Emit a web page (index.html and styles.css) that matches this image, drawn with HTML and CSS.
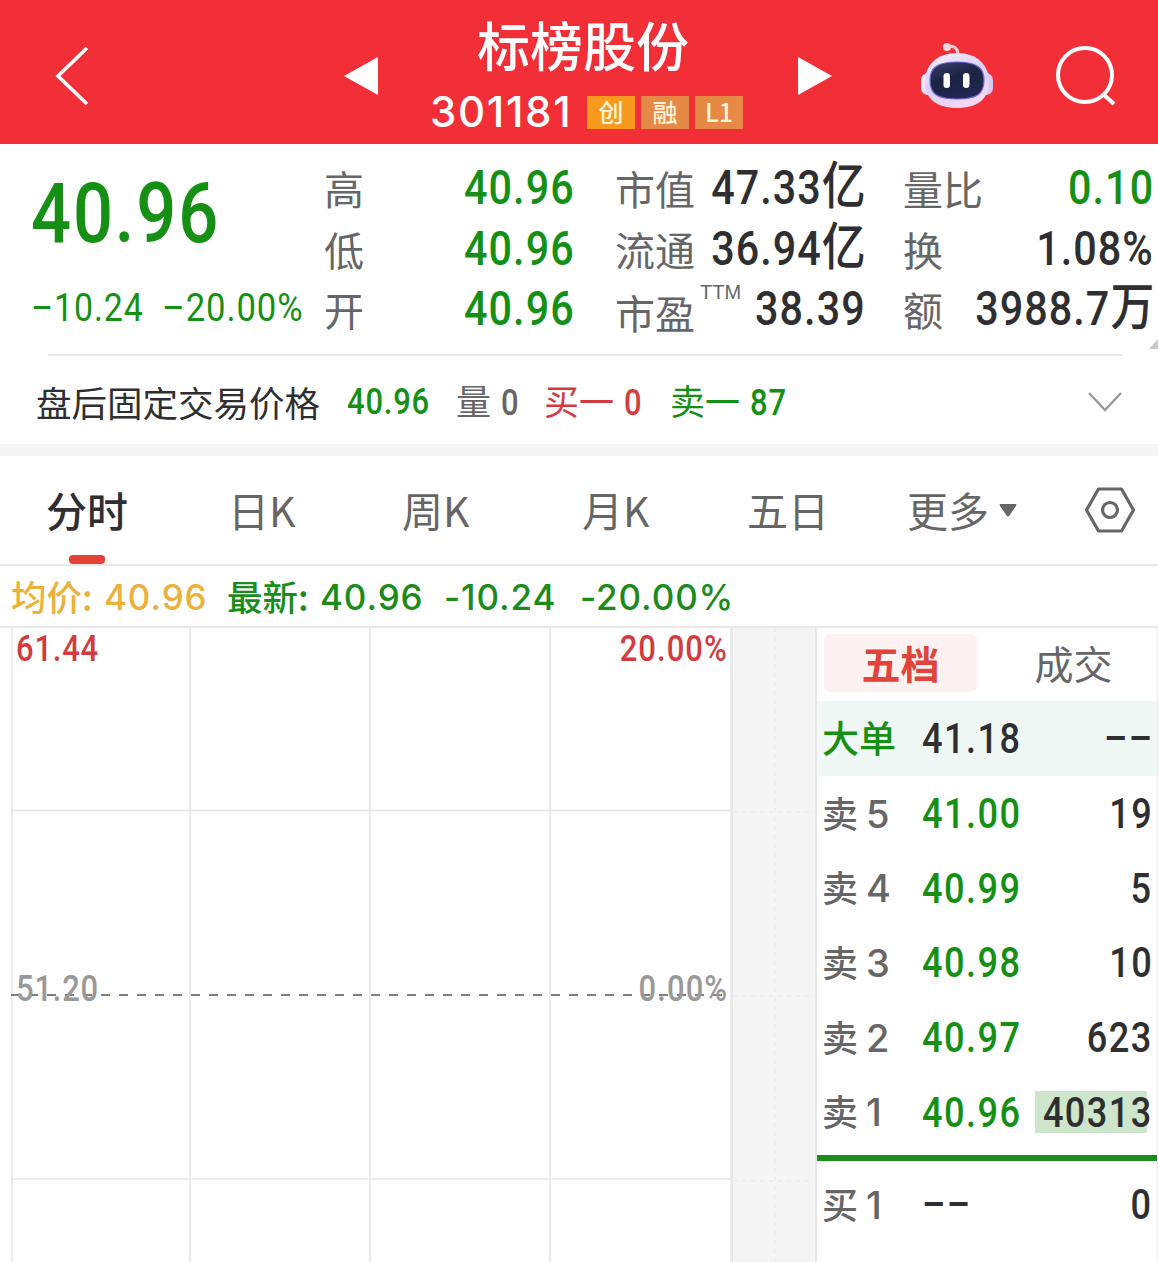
FILE: index.html
```html
<!DOCTYPE html>
<html lang="zh-CN">

<head>
    <meta charset="UTF-8">
    <meta name="viewport" content="width=device-width, initial-scale=1.0">
    <title>标榜股份 301181</title>
    <link rel="stylesheet" href="styles.css">
</head>

<body>

    <!-- Header -->
    <header class="topbar">
        <svg class="back" viewBox="0 0 36 62" fill="none" stroke="#fff" stroke-width="3.6">
            <path d="M33 3 L4 31 L33 59" />
        </svg>
        <svg class="prev" viewBox="0 0 34 38"><path d="M34 0V38L0 19Z" fill="#fff" /></svg>
        <div class="stock">
            <h1>标榜股份</h1>
            <div class="stock-code">
                <span class="code">301181</span>
                <span class="badge badge-main">创</span>
                <span class="badge">融</span>
                <span class="badge">L1</span>
            </div>
        </div>
        <svg class="next" viewBox="0 0 34 38"><path d="M0 0V38L34 19Z" fill="#fff" /></svg>
        <svg class="robot" viewBox="0 0 74 68">
            <defs>
                <linearGradient id="head" x1="0" y1="0" x2="0.5" y2="1">
                    <stop offset="0" stop-color="#fff3f6" />
                    <stop offset="0.55" stop-color="#d5d0fa" />
                    <stop offset="1" stop-color="#f6d8f3" />
                </linearGradient>
                <linearGradient id="face" x1="0" y1="0" x2="0.4" y2="1">
                    <stop offset="0" stop-color="#3b3f69" />
                    <stop offset="0.5" stop-color="#1b2344" />
                    <stop offset="1" stop-color="#202750" />
                </linearGradient>
            </defs>
            <path d="M27 5C32 3 38 5 38 13" fill="none" stroke="#fbd3da" stroke-width="3" />
            <circle cx="27" cy="5" r="4" fill="#fbd3da" />
            <rect x="1" y="31" width="14" height="22" rx="7" fill="#f3e5fb" />
            <rect x="59" y="31" width="14" height="22" rx="7" fill="#d9c9f5" />
            <path d="M37 11C57 11 69 23 69 40C69 57 57 66 37 66C17 66 5 57 5 40C5 23 17 11 37 11Z" fill="url(#head)" />
            <path d="M37 20C57 20 64 26 64 38C64 52 57 57 37 57C17 57 10 52 10 38C10 26 17 20 37 20Z" fill="url(#face)" stroke="#7468d5" stroke-width="1.2" />
            <rect x="23.500" y="31" width="6.500" height="15" rx="3.200" fill="#fff" />
            <rect x="43" y="31" width="6.500" height="15" rx="3.200" fill="#fff" />
        </svg>
        <svg class="search" viewBox="0 0 62 62" fill="none" stroke="#fff" stroke-width="4">
            <circle cx="30" cy="30" r="27" />
            <path d="M48 49L59 59" />
        </svg>
    </header>

    <!-- Quote -->
    <section class="quote">
        <div class="price-block">
            <div class="price"><span class="num">40.96</span></div>
            <div class="change">
                <span class="num diff">–10.24</span>
                <span class="num">–20.00%</span>
            </div>
        </div>
        <dl class="stats">
            <div><dt>高</dt><dd class="down num">40.96</dd></div>
            <div><dt>低</dt><dd class="down num">40.96</dd></div>
            <div><dt>开</dt><dd class="down num">40.96</dd></div>
        </dl>
        <dl class="stats">
            <div><dt>市值</dt><dd class="num">47.33<i>亿</i></dd></div>
            <div><dt>流通</dt><dd class="num">36.94<i>亿</i></dd></div>
            <div><dt class="low">市盈<sup>TTM</sup></dt><dd class="num">38.39</dd></div>
        </dl>
        <dl class="stats">
            <div><dt>量比</dt><dd class="down num">0.10</dd></div>
            <div><dt>换</dt><dd class="num">1.08%</dd></div>
            <div><dt>额</dt><dd class="num">3988.7<i>万</i></dd></div>
        </dl>
        <svg class="corner" viewBox="0 0 9 10"><path d="M9 0V10H0Z" fill="#c9c9c9" /></svg>
    </section>

    <!-- After-hours trading -->
    <section class="after-hours">
        <span class="ah-title">盘后固定交易价格</span>
        <span class="ah-price down num">40.96</span>
        <span class="ah-item">量<b class="num">0</b></span>
        <span class="ah-item up">买一<b class="num">0</b></span>
        <span class="ah-item down">卖一<b class="num">87</b></span>
        <svg class="expand" viewBox="0 0 34 20" fill="none" stroke="#999" stroke-width="2.4">
            <path d="M1 1L17 18L33 1" />
        </svg>
    </section>

    <!-- Period tabs -->
    <nav class="tabs">
        <a class="tab active">分时</a>
        <a class="tab">日K</a>
        <a class="tab">周K</a>
        <a class="tab">月K</a>
        <a class="tab">五日</a>
        <a class="tab more">更多<svg viewBox="0 0 18 13"><path d="M1 0H17Q18 1 17 2L10 12Q9 13 8 12L1 2Q0 1 1 0Z" fill="#666" /></svg></a>
        <svg class="settings" viewBox="0 0 52 46" fill="none" stroke="#666" stroke-width="3.2">
            <path d="M14.500 2H37.500L49.500 23L37.500 44H14.500L2.500 23Z" stroke-linejoin="round" />
            <circle cx="26" cy="23" r="7.500" />
        </svg>
    </nav>

    <div class="summary">
        <span class="avg">均价:</span><span class="avg value">40.96</span>
        <span class="latest">最新:</span><span class="value">40.96</span>
        <span class="value diff">-10.24</span>
        <span class="value pct">-20.00%</span>
    </div>

    <!-- Chart and order book -->
    <main class="board">
        <div class="chart">
            <svg class="grid" viewBox="0 0 720 635" fill="none" stroke="#e6e6e6" stroke-width="1.6">
                <path d="M1 0V635M179 0V635M359 0V635M539 0V635M720 0V635M0 182.500H720M0 551H720" />
                <path d="M0 367H714" stroke="#555" stroke-width="1.400" stroke-dasharray="9 9" />
            </svg>
            <span class="axis top-left up num">61.44</span>
            <span class="axis top-right up num">20.00%</span>
            <span class="axis mid-left num">51.20</span>
            <span class="axis mid-right num">0.00%</span>
        </div>
        <div class="after-chart">
            <svg viewBox="0 0 82 635" fill="none" stroke="#ebebeb" stroke-width="1.500" stroke-dasharray="4 5">
                <path d="M42 0V635M0 184H82M0 368H82M0 553H82" />
            </svg>
        </div>
        <div class="book">
            <div class="book-tabs">
                <span class="book-tab selected">五档</span>
                <span class="book-tab">成交</span>
            </div>
            <div class="order big"><span class="side down">大单</span><span class="num level">41.18</span><span class="num volume">––</span></div>
            <div class="order"><span class="side">卖<b>5</b></span><span class="num level down">41.00</span><span class="num volume">19</span></div>
            <div class="order"><span class="side">卖<b>4</b></span><span class="num level down">40.99</span><span class="num volume">5</span></div>
            <div class="order"><span class="side">卖<b>3</b></span><span class="num level down">40.98</span><span class="num volume">10</span></div>
            <div class="order"><span class="side">卖<b>2</b></span><span class="num level down">40.97</span><span class="num volume">623</span></div>
            <div class="order bar"><span class="side">卖<b>1</b></span><span class="num level down">40.96</span><span class="num volume">40313</span></div>
            <div class="split"></div>
            <div class="order"><span class="side">买<b>1</b></span><span class="num level">––</span><span class="num volume">0</span></div>
        </div>
    </main>

</body>

</html>
```

FILE: styles.css
```css
* {
    margin: 0;
    padding: 0;
    box-sizing: border-box;
}

body {
    width: 1158px;
    height: 1262px;
    overflow: hidden;
    background: #fff;
    color: #2f2f31;
    font-family: "Noto Sans CJK SC", sans-serif;
}

svg {
    display: block;
    flex: none;
}

/* Condensed figures used for all prices */
.num {
    display: inline-block;
    font-family: Roboto, "Noto Sans CJK SC", sans-serif;
    font-weight: 500;
    letter-spacing: 0.026em;
    white-space: nowrap;
    transform: scaleX(0.86);
    transform-origin: left center;
}

.up {
    color: #d23c3f;
}

.down {
    color: #159015;
}

/* Header */
.topbar {
    display: flex;
    align-items: center;
    height: 144px;
    padding-top: 8px;
    background: #f22f37;
    color: #fff;
}

.back {
    width: 36px;
    height: 62px;
    margin-left: 54px;
}

.prev,
.next {
    width: 34px;
    height: 38px;
}

.prev {
    margin-left: 254px;
}

.stock {
    width: 420px;
    height: 136px;
    margin-top: -8px;
    padding-left: 52px;
}

.stock h1 {
    height: 84px;
    padding-left: 47px;
    font-size: 53px;
    font-weight: 500;
    line-height: 81px;
}

.stock-code {
    display: flex;
    align-items: center;
    height: 48px;
}

.code {
    width: 157px;
    height: 48px;
    font-family: Inter, sans-serif;
    font-size: 42px;
    font-weight: 500;
    line-height: 47px;
    letter-spacing: 1.7px;
}

.badge {
    width: 48px;
    height: 33px;
    margin-top: 1px;
    margin-right: 6px;
    background: #e68846;
    color: #fff5d8;
    font-size: 25px;
    font-weight: 500;
    line-height: 30px;
    text-align: center;
}

.badge-main {
    background: #fa9a1c;
}

.robot {
    width: 74px;
    height: 68px;
    margin-left: 88px;
}

.search {
    width: 62px;
    height: 62px;
    margin-left: 61px;
}

/* Quote */
.quote {
    position: relative;
    display: grid;
    grid-template-columns: 293px 250px 249px 250px;
    height: 212px;
    padding: 13px 0 0 31px;
}

.quote::after {
    content: "";
    position: absolute;
    left: 48px;
    right: 36px;
    bottom: 0;
    height: 2px;
    background: #e9e9e9;
}

.price-block {
    color: #159015;
}

.price {
    display: flex;
    height: 113px;
    font-size: 83px;
    line-height: 113px;
}

.price .num {
    transform: scaleX(0.85);
}

.change {
    display: flex;
    height: 74px;
    font-size: 38.5px;
    line-height: 75px;
}

.change .num {
    font-weight: 450;
    transform: scaleX(0.9);
}

.change .diff {
    width: 131px;
    transform: scaleX(0.88);
}

.stats {
    height: 182px;
}

.stats + .stats {
    margin-left: 41px;
}

.stats + .stats + .stats {
    margin-left: 80px;
}

.stats div {
    display: flex;
    justify-content: space-between;
    width: 250px;
    height: 60.5px;
    line-height: 60.5px;
}

.stats dt {
    padding-top: 1px;
    color: #666;
    font-size: 40px;
    white-space: nowrap;
}

.stats dt.low {
    padding-top: 4px;
}

.stats sup {
    margin-left: 5px;
    font-family: "Liberation Sans", sans-serif;
    font-size: 20px;
    line-height: 0;
    vertical-align: 30px;
}

/* the unscaled box is wider than the drawn figures, so it may reach under the label */
.stats dd {
    margin-left: -40px;
    margin-right: -1px;
    padding-top: 1px;
    font-size: 48px;
    transform-origin: right center;
}

.stats i {
    font-size: 51px;
    font-style: normal;
    line-height: 0;
    letter-spacing: 0;
}

.corner {
    position: absolute;
    right: 0;
    bottom: 7px;
    width: 9px;
    height: 10px;
}

/* After-hours trading */
.after-hours {
    display: flex;
    align-items: center;
    height: 100px;
    padding: 4px 36px 0;
    border-bottom: 12px solid #f5f5f5;
    font-size: 35.5px;
    line-height: 84px;
}

.ah-title {
    width: 311px;
}

.ah-price {
    width: 109px;
    font-size: 36px;
}

.ah-item {
    width: 88px;
    margin-top: -2px;
    color: #666;
    font-size: 35px;
    white-space: nowrap;
}

.ah-item.up {
    width: 126px;
    color: #d23c3f;
}

.ah-item.down {
    color: #159015;
}

.ah-item .num {
    margin-left: 10px;
    font-size: 36px;
}

.expand {
    width: 34px;
    height: 20px;
    margin-left: auto;
}

/* Period tabs */
.tabs {
    position: relative;
    display: flex;
    align-items: center;
    height: 110px;
    padding-left: 46px;
    border-bottom: 2px solid #e9e9e9;
}

.tab {
    width: 180px;
    height: 108px;
    color: #666;
    font-size: 41px;
    line-height: 106px;
    white-space: nowrap;
}

.active {
    width: 182px;
    color: #2f2f31;
    font-weight: 500;
}

.active::after {
    content: "";
    position: absolute;
    left: 69px;
    bottom: 0;
    width: 36px;
    height: 9px;
    border-radius: 4px;
    background: #e44235;
}

.more svg {
    display: inline-block;
    width: 18px;
    height: 13px;
    margin-left: 10px;
    vertical-align: 10px;
}

.tab:nth-child(2) {
    width: 174px;
}

.tab:nth-child(4) {
    width: 165px;
}

.tab:nth-child(5) {
    width: 160px;
}

.tab.more {
    width: 177px;
}

.settings {
    width: 52px;
    height: 46px;
}

/* Average / latest line */
.summary {
    display: flex;
    height: 60px;
    padding-left: 11px;
    color: #1b8c1b;
    font-size: 35.5px;
    font-weight: 500;
    line-height: 60px;
    white-space: nowrap;
}

.summary span {
    width: 93px;
}

.summary .avg {
    color: #ecb13b;
}

.summary .latest {
    margin-left: -1px;
}

.summary .value {
    width: 124px;
    font-family: Inter, sans-serif;
    font-size: 35px;
    font-weight: 550;
    line-height: 62px;
    letter-spacing: 0.9px;
}

.summary .diff {
    width: 136px;
}

/* Chart */
.board {
    display: flex;
    height: 636px;
    border-top: 2px solid #e9e9e9;
}

.chart {
    position: relative;
    width: 720px;
    margin-left: 11px;
}

.grid {
    width: 720px;
    height: 635px;
}

.axis {
    position: absolute;
    font-size: 36px;
    line-height: 40px;
}

.top-left {
    top: 1px;
    left: 5px;
}

.top-right {
    top: 1px;
    right: 3px;
    transform-origin: right center;
}

.mid-left {
    top: 341px;
    left: 5px;
    color: #999;
}

.mid-right {
    top: 341px;
    right: 3px;
    color: #999;
    transform-origin: right center;
}

.top-right,
.mid-right {
    letter-spacing: 0.035em;
}

.after-chart {
    width: 86px;
    background: #f4f4f4;
    border-left: 2px solid #e9e9e9;
    border-right: 2px solid #e6e6e6;
}

.after-chart svg {
    width: 82px;
    height: 635px;
}

/* Order book */
.book {
    width: 341px;
    border-right: 1px solid #e9e9e9;
}

.book-tabs {
    display: flex;
    height: 73px;
    padding: 6px 0 0 7px;
}

.book-tab {
    flex: none;
    width: 153px;
    height: 58px;
    margin-right: 20px;
    border-radius: 6px;
    color: #666;
    font-size: 39px;
    line-height: 56px;
    text-align: center;
}

.selected {
    background: #fef1f1;
    color: #e0443a;
    font-weight: 700;
}

.order {
    display: flex;
    align-items: center;
    height: 74.7px;
    padding: 0 4px 0 5px;
    font-size: 42px;
    line-height: 76px;
}

.order.big {
    background: #eff8f5;
}

.side {
    flex: none;
    width: 100px;
    height: 75px;
    color: #666;
    font-size: 36px;
    font-weight: 500;
    line-height: 72px;
    white-space: nowrap;
}

.side.down {
    color: #159015;
    font-size: 37px;
}

.side b {
    margin-left: 8px;
    font-family: Inter, sans-serif;
    font-size: 38px;
    font-weight: 500;
}

.order .num {
    height: 74px;
    letter-spacing: 0.04em;
}

.level {
    margin-right: -20px;
}

.volume {
    margin-left: auto;
    transform-origin: right center;
}

.bar {
    background: linear-gradient(#cde6cc, #cde6cc) 218px 17px / 112px 42px no-repeat;
}

.split {
    height: 6px;
    margin: 6px 0;
    background: #1c8c1c;
}
```
